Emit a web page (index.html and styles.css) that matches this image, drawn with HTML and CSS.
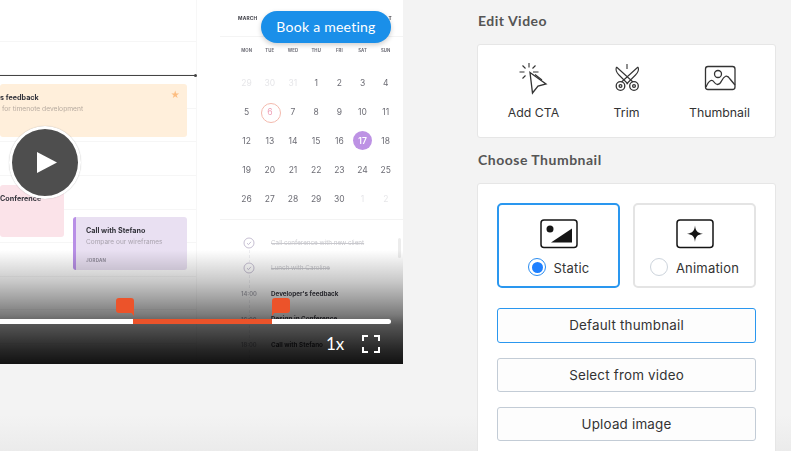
FILE: index.html
```html
<!DOCTYPE html>
<html lang="en">
<head>
<meta charset="utf-8">
<title>Edit Video</title>
<link rel="stylesheet" href="styles.css">
</head>
<body>
<div class="page">
  <section class="video">
    <div class="mock">
      <div class="timeline">
        <div class="now"></div>
        <div class="event orange">
          <b class="ev-title">s feedback</b>
          <span class="ev-sub">for timenote development</span>
          <span class="ev-star">★</span>
        </div>
        <div class="event pink">
          <b class="ev-title">Conference</b>
        </div>
        <div class="event purple">
          <b class="ev-title">Call with Stefano</b>
          <span class="ev-sub">Compare our wireframes</span>
          <span class="ev-who">JORDAN</span>
        </div>
      </div>
      <aside class="side">
        <div class="month"><span>MARCH</span><span>T</span></div>
        <div class="weekdays"><span>MON</span><span>TUE</span><span>WED</span><span>THU</span><span>FRI</span><span>SAT</span><span>SUN</span></div>
        <div class="days">
          <span class="off">29</span><span class="off">30</span><span class="off">31</span><span>1</span><span>2</span><span>3</span><span>4</span>
          <span>5</span><span class="today">6</span><span>7</span><span>8</span><span>9</span><span>10</span><span>11</span>
          <span>12</span><span>13</span><span>14</span><span>15</span><span>16</span><span class="picked">17</span><span>18</span>
          <span>19</span><span>20</span><span>21</span><span>22</span><span>23</span><span>24</span><span>25</span>
          <span>26</span><span>27</span><span>28</span><span>29</span><span>30</span><span class="off">1</span><span class="off">2</span>
        </div>
        <ul class="agenda">
          <li class="done"><span class="when"><svg class="check" viewBox="0 0 12 12"><circle cx="6" cy="6" r="5"/><path d="M4 6.2l1.5 1.4L8 4.8"/></svg></span><s>Call conference with new client</s></li>
          <li class="done"><span class="when"><svg class="check" viewBox="0 0 12 12"><circle cx="6" cy="6" r="5"/><path d="M4 6.2l1.5 1.4L8 4.8"/></svg></span><s>Lunch with Caroline</s></li>
          <li><span class="when">14:00</span><b>Developer's feedback</b></li>
          <li><span class="when">16:00</span><b>Design in Conference</b></li>
          <li><span class="when">18:00</span><b>Call with Stefano</b></li>
        </ul>
        <div class="scroll"></div>
      </aside>
    </div>
    <div class="shade"></div>
    <a class="book">Book a meeting</a>
    <button class="play" aria-label="Play"><svg viewBox="0 0 20 21" width="20" height="21"><path d="M0 0L20 10.5L0 21Z"/></svg></button>
    <div class="track"><div class="range"></div></div>
    <span class="mark mark-a"></span>
    <span class="mark mark-b"></span>
    <span class="speed">1x</span>
    <svg class="full" viewBox="0 0 18 18" width="18" height="18"><path d="M1 6V1H6M12 1H17V6M17 12V17H12M6 17H1V12"/></svg>
  </section>

  <main class="panel">
    <h2 class="head">Edit Video</h2>
    <div class="card tools">
      <div class="tool">
        <svg viewBox="0 0 36 36" width="36" height="36"><path d="M14 12.5L30 24L22 26L16.5 33Z"/><path d="M13 3V7.5M6.5 5.5L9.5 8.500M19.500 5.500L16.500 8.500M3.500 12H8.500M22.500 12H17M6.500 18.500L9.500 15.500M19 14.500L26 20" class="thin"/></svg>
        <span>Add CTA</span>
      </div>
      <div class="tool">
        <svg viewBox="0 0 36 36" width="36" height="36"><circle cx="11.5" cy="26" r="4.3"/><circle cx="25" cy="26" r="4.3"/><circle cx="11.5" cy="26" r="1.4"/><circle cx="25" cy="26" r="1.4"/><path d="M7.5 7L24 22M7.5 7C6 10.500 8 13 10 15L19 24M29 7L12.500 22M29 7C30.500 10.500 28.500 13 26.500 15L17.500 24M18 4V9" class="thin"/></svg>
        <span>Trim</span>
      </div>
      <div class="tool">
        <svg viewBox="0 0 36 36" width="36" height="36"><rect x="3.500" y="6.500" width="29.500" height="23" rx="2.500"/><circle cx="16" cy="14" r="3.500"/><path d="M4 27C7 20 10 19 12 22C14 25 17 26 19.500 21C22 16 25 14 28 19L33 25"/></svg>
        <span>Thumbnail</span>
      </div>
    </div>
    <h2 class="head head-b">Choose Thumbnail</h2>
    <div class="card choose">
      <div class="modes">
        <label class="mode active">
          <svg viewBox="0 0 38 30" width="38" height="30"><rect x="1" y="1" width="36" height="27.500" rx="3"/><circle class="solid" cx="10" cy="10" r="3.500"/><path class="solid" d="M11 23.500L32 9.500V23.500Z"/></svg>
          <span class="pick"><i class="radio on"></i><span class="pick-text">Static</span></span>
        </label>
        <label class="mode">
          <svg viewBox="0 0 38 30" width="38" height="30"><rect x="1" y="1" width="36" height="27.500" rx="3"/><path class="solid" d="M19 6.500C19.700 12 21 13.800 27 14.800C21 15.800 19.700 17.500 19 23C18.300 17.500 17 15.800 11 14.800C17 13.800 18.300 12 19 6.500Z"/></svg>
          <span class="pick"><i class="radio"></i><span class="pick-text">Animation</span></span>
        </label>
      </div>
      <button class="opt sel">Default thumbnail</button>
      <button class="opt">Select from video</button>
      <button class="opt">Upload image</button>
    </div>
  </main>
</div>
</body>
</html>
```

FILE: styles.css
```css
* { box-sizing: border-box; }
html, body { margin: 0; height: 100%; }
body {
  overflow: hidden;
  font-family: "Inter", "Liberation Sans", sans-serif;
  background: linear-gradient(#f3f3f3 0, #f3f3f3 415px, #ebebeb 451px);
}
.page { display: flex; height: 451px; align-items: flex-start; }

/* video */
.video { position: relative; width: 403px; height: 364px; flex: none; overflow: hidden; background: #fff; }
.mock { display: flex; height: 100%; filter: blur(.35px); }
.timeline {
  position: relative;
  width: 197px;
  height: 100%;
  flex: none;
  border-right: 1px solid #f7f7f7;
  background: repeating-linear-gradient(#fff 0, #fff 32.6px, #f6f6f6 32.6px, #f6f6f6 33.6px) 0 8px;
}
.now { position: absolute; left: 0; top: 75px; width: 196px; height: 1px; background: #444; }
.now::after { content: ""; position: absolute; right: -1px; top: -1px; width: 3px; height: 3px; border-radius: 50%; background: #444; }
.event { position: absolute; border-radius: 3px; display: flex; flex-direction: column; white-space: nowrap; overflow: hidden; }
.ev-title { font-size: 7.200px; line-height: 9px; font-weight: 700; color: #33333b; }
.ev-sub { font-size: 6.500px; line-height: 9px; color: #a9a3ae; margin-top: 3px; }
.ev-star { position: absolute; right: 7px; top: 6px; font-size: 9px; line-height: 10px; color: #fdbd80; }
.ev-who { font-size: 4.500px; line-height: 6px; font-weight: 700; color: #8f8a99; margin-top: 11px; letter-spacing: .2px; }
.orange { left: 0; top: 84px; width: 187px; height: 53px; background: #ffefdb; padding: 9px 0 0 0; }
.orange .ev-sub { margin-left: 2px; font-size: 6.700px; color: #b7aba0; }
.pink { left: 0; top: 185px; width: 64px; height: 52px; background: #fbe3e9; padding-top: 9px; }
.purple { left: 73px; top: 217px; width: 114px; height: 53px; background: #e9e0f2; border-left: 3px solid #b88fe6; padding: 9px 0 0 10px; }

.side { position: relative; flex: 1; display: flex; flex-direction: column; padding-left: 23px; }
.month { display: flex; justify-content: space-between; height: 37px; padding: 14px 11px 0 18px; border-bottom: 1px solid #f4f4f4; font-size: 4.800px; line-height: 8px; font-weight: 700; color: #3c3c44; letter-spacing: .2px; }
.weekdays { display: grid; grid-template-columns: repeat(7, 23.200px); height: 27px; margin: 0 0 0 15px; padding-top: 11px; font-size: 4.300px; line-height: 6px; font-weight: 700; color: #6f6f78; text-align: center; letter-spacing: .1px; }
.days { display: grid; grid-template-columns: repeat(7, 23.200px); grid-auto-rows: 29.200px; margin: 4px 0 0 15px; height: 151px; flex: none; font-size: 8.500px; color: #6d6d75; text-align: center; }
.days span { display: flex; align-items: center; justify-content: center; position: relative; z-index: 0; }
.days .off { color: #e6e6e9; }
.today { color: #ee9fb6; }
.today::before { content: ""; position: absolute; z-index: -1; left: 50%; top: 50%; width: 18px; height: 18px; margin: -9px 0 0 -9px; border-radius: 50%; border: 1px solid #f3b9ad; }
.days .picked { color: #fff; font-weight: 600; }
.picked::before { content: ""; position: absolute; z-index: -1; left: 50%; top: 50%; width: 19px; height: 19px; margin: -9.500px 0 0 -9.500px; border-radius: 50%; background: #bd92e4; }
.agenda { position: relative; list-style: none; margin: 0; padding: 10px 0 0 21px; border-top: 1px solid #f3f3f3; font-size: 6.300px; }
.agenda::before { content: ""; position: absolute; left: 29px; top: 30px; bottom: -20px; border-left: 1px dashed #eeeef1; }
.agenda li { position: relative; display: flex; align-items: center; height: 25.500px; color: #3a3a42; white-space: nowrap; }
.agenda b { font-weight: 700; }
.agenda s { color: #c9c9ce; }
.when { width: 30px; flex: none; font-size: 5.800px; font-weight: 600; color: #a8a8b0; background: #fff; }
.check { display: block; width: 12px; height: 12px; margin-left: 2px; fill: none; stroke: #b7afc6; stroke-width: .8; }
.scroll { position: absolute; left: 201px; top: 238px; width: 3px; height: 20px; border-radius: 2px; background: #ececec; }

.shade {
  position: absolute; left: 0; right: 0; top: 250px; bottom: 0;
  background: linear-gradient(rgba(0,0,0,0) 0, rgba(0,0,0,.22) 32px, rgba(0,0,0,.36) 48px, rgba(0,0,0,.52) 65px, rgba(0,0,0,.67) 75px, rgba(0,0,0,.85) 100px, rgba(0,0,0,.93) 114px);
}
.book {
  position: absolute; left: 261px; top: 11px; width: 130px; height: 32px;
  border-radius: 16px; background: #1a8fe9; color: #fff;
  font-family: "Lato", sans-serif; font-size: 14px; line-height: 32px; text-align: center; letter-spacing: .25px;
  box-shadow: 0 2px 5px rgba(0,0,0,.2);
}
.play {
  position: absolute; left: 9px; top: 126px; width: 72px; height: 73px; padding: 0 0 0 4px;
  border: 3px solid #fff; border-radius: 50%; background: #4e4e4e;
  display: flex; align-items: center; justify-content: center; box-shadow: 0 0 1px rgba(0,0,0,.3);
}
.play path { fill: #fff; }
.track { position: absolute; left: 0; top: 319px; width: 391px; height: 5px; background: #fff; border-radius: 0 3px 3px 0; }
.range { margin-left: 133px; width: 139px; height: 100%; background: #ec532a; }
.mark { position: absolute; top: 298px; width: 18px; height: 15px; background: #ec532a; border-radius: 3px; }
.mark-a { left: 116px; }
.mark-b { left: 272px; }
.mark::after { content: ""; position: absolute; top: 13px; width: 0; height: 0; border-top: 5px solid #ec532a; }
.mark-a::after { right: 0; border-left: 4px solid transparent; }
.mark-b::after { left: 0; border-right: 4px solid transparent; }
.speed { position: absolute; left: 326px; top: 334px; font-family: "Lato", sans-serif; font-size: 17px; line-height: 20px; color: #fff; }
.full { position: absolute; left: 362px; top: 335px; fill: none; stroke: #fff; stroke-width: 2; }

/* panel */
.panel { width: 299px; margin-left: 74px; flex: none; }
.head { margin: 12px 0 0 1px; font-family: "Lato", sans-serif; font-size: 14px; line-height: 17px; font-weight: 700; color: #555; letter-spacing: .5px; }
.head-b { margin-top: 13px; }
.card { background: #fff; border: 1px solid #e6e6e6; border-radius: 3px; }
.tools { display: grid; grid-template-columns: repeat(3, 93px); justify-content: center; height: 94px; margin-top: 15px; padding-top: 15px; }
.tool { display: flex; flex-direction: column; align-items: center; gap: 9px; font-size: 12.300px; line-height: 16px; color: #333; }
.tool svg { fill: none; stroke: #333; stroke-width: 1.300; }
.tool .thin { stroke-width: 1.100; }
.choose { margin-top: 15px; padding: 19px 19px 10px; height: 280px; display: flex; flex-direction: column; }
.modes { display: grid; grid-template-columns: repeat(2, 123px); gap: 13px; margin-bottom: 20px; flex: none; }
.mode { height: 85px; display: flex; flex-direction: column; align-items: center; padding-top: 14px; gap: 8px; border: 2px solid #e4e4e4; border-radius: 5px; }
.mode.active { border-color: #2a97ef; }
.mode svg { fill: none; stroke: #151515; stroke-width: 1.500; }
.mode svg .solid { fill: #151515; stroke: none; }
.pick { display: flex; align-items: center; gap: 8px; font-size: 13px; line-height: 18px; color: #333; letter-spacing: .2px; }
.pick-text { padding-top: 2px; }
.radio { width: 18px; height: 18px; border-radius: 50%; border: 1px solid #cdd4dc; background: #fff; }
.radio.on { border: 1.500px solid #2a8cf0; padding: 2.500px; background: #1e80ff content-box; }
.opt { flex: none; width: 259px; height: 34px; margin: 0 0 15px; padding: 1px 0 0; border: 1px solid #c3ccd6; border-radius: 3px; background: #fdfdfd; font: 13.400px/1 "Inter", sans-serif; color: #333; letter-spacing: .2px; }
.opt.sel { height: 35px; padding: 0; border-color: #2a97ef; }
```
